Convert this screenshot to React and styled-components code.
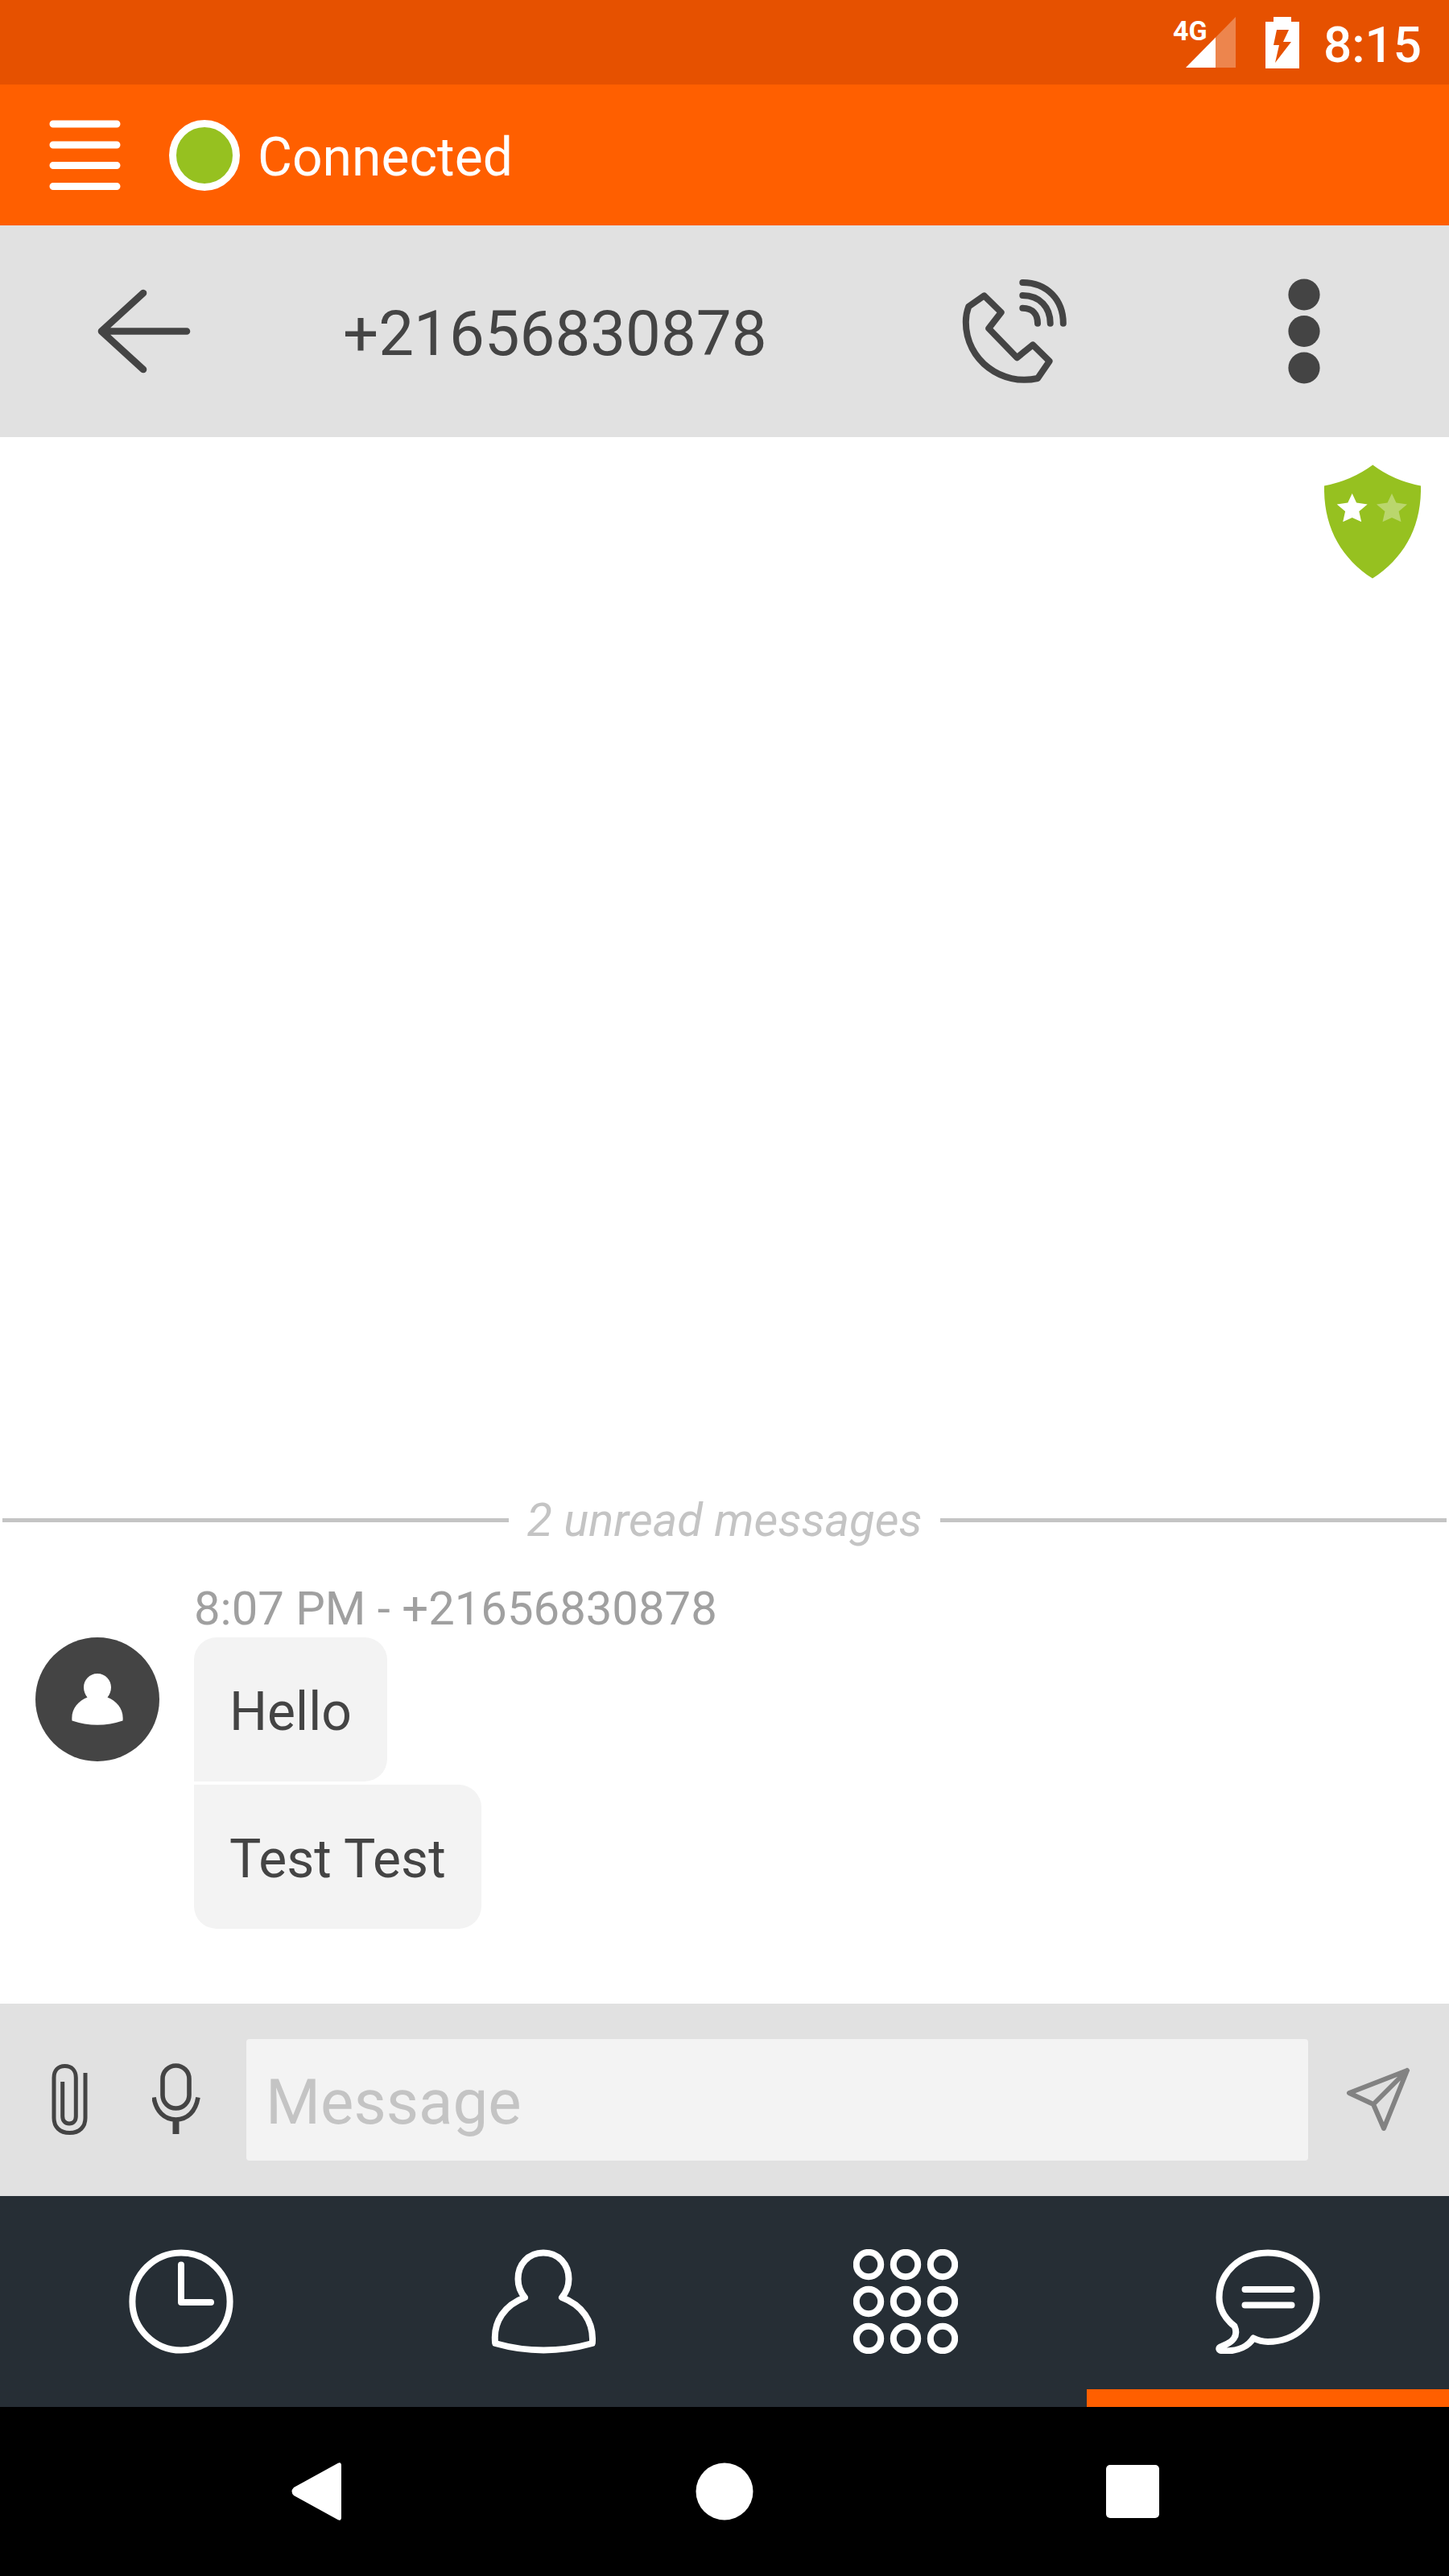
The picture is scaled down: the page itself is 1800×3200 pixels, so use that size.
import React from "react";
import styled, { createGlobalStyle, css } from "styled-components";

const color = {
  status: "#e65100",
  brand: "#ff5f00",
  bar: "#e1e1e1",
  field: "#f3f3f3",
  ink: "#444444",
  meta: "#a0a0a0",
  faint: "#c4c4c4",
  send: "#828282",
  green: "#96c120",
  tabs: "#262e35",
};

const GlobalStyle = createGlobalStyle`
  *, *::before, *::after { box-sizing: border-box; }
  body { margin: 0; background: #ffffff; }
  body, button, input { font-family: Roboto, "Noto Sans", sans-serif; }
  h1, p, ul { margin: 0; padding: 0; }
  svg { display: block; }
`;

/* Roboto labels sit a little below the middle of their bar. */
const barText = css`
  padding-top: 6px;
  font-weight: 400;
  white-space: nowrap;
`;

const Screen = styled.div`
  display: flex;
  flex-direction: column;
  min-height: 100vh;
`;

const StatusBar = styled.div`
  display: flex;
  align-items: center;
  justify-content: flex-end;
  height: 105px;
  padding-right: 34px;
  background: ${color.status};
  color: #ffffff;
`;

const Signal = styled.div`
  position: relative;
  display: flex;
  justify-content: flex-end;
  width: 78px;
  margin-right: 37px;
`;

const Network = styled.span`
  position: absolute;
  top: 0;
  left: 0;
  font-size: 34px;
  line-height: 34px;
  font-weight: 700;
`;

const Clock = styled.time`
  ${barText}
  margin-left: 30px;
  font-size: 62px;
  line-height: 72px;
  font-weight: 500;
`;

const AppBar = styled.header`
  display: flex;
  align-items: center;
  height: 175px;
  padding: 0 61px;
  background: ${color.brand};
  color: #ffffff;
`;

const IconButton = styled.button`
  display: flex;
  align-items: center;
  justify-content: center;
  flex: none;
  width: ${({ $width }) => $width || "auto"};
  height: ${({ $fill }) => ($fill ? "100%" : "auto")};
  padding: 0;
  border: 0;
  background: none;
  color: ${({ $color }) => $color || "inherit"};
  cursor: pointer;
`;

const Presence = styled.span`
  flex: none;
  width: 88px;
  height: 88px;
  margin: 0 22px 0 60px;
  border: 9px solid #ffffff;
  border-radius: 50%;
  background: ${color.green};
`;

const PresenceText = styled.span`
  ${barText}
  font-size: 66px;
  line-height: 80px;
`;

const ChatBar = styled.div`
  display: grid;
  grid-template-columns: 1fr 2fr 1fr 1fr;
  align-items: center;
  height: 263px;
  background: ${color.bar};
  color: ${color.ink};
`;

const Contact = styled.h1`
  ${barText}
  padding-left: 66px;
  font-size: 78px;
  line-height: 96px;
`;

const Conversation = styled.main`
  display: flex;
  flex: 1;
  flex-direction: column;
  padding: 34px 0 93px;
`;

const Trust = styled.div`
  align-self: flex-end;
  margin-right: 35px;
`;

const Unread = styled.div`
  display: flex;
  align-items: center;
  gap: 22px;
  margin-top: auto;
  padding: 0 3px;
  color: ${color.faint};
  font-size: 58px;
  line-height: 72px;
  font-style: italic;
  white-space: nowrap;

  &::before,
  &::after {
    content: "";
    flex: 1;
    height: 5px;
    background: ${color.faint};
  }
`;

const MessageGroup = styled.section`
  display: grid;
  grid-template-columns: 154px 1fr;
  column-gap: 43px;
  margin-top: 38px;
  padding: 0 44px;
`;

const Meta = styled.p`
  grid-column: 2;
  color: ${color.meta};
  font-size: 58px;
  line-height: 72px;
`;

const Avatar = styled.div`
  display: flex;
  align-items: center;
  justify-content: center;
  width: 154px;
  height: 154px;
  border-radius: 50%;
  background: ${color.ink};
`;

const Bubbles = styled.ul`
  display: flex;
  flex-direction: column;
  align-items: flex-start;
  gap: 4px;
  list-style: none;
`;

const Bubble = styled.li`
  padding: 48px 44px 41px;
  border-radius: 0 28px 28px 0;
  background: ${color.field};
  color: ${color.ink};
  font-size: 66px;
  line-height: 90px;

  &:first-child { border-top-left-radius: 28px; }
  &:last-child { border-bottom-left-radius: 28px; }
`;

const Composer = styled.form`
  display: flex;
  align-items: center;
  height: 239px;
  padding: 0 22px 0 21px;
  background: ${color.bar};
  color: ${color.ink};
`;

const MessageInput = styled.input`
  flex: 1;
  min-width: 0;
  height: 151px;
  margin: 0 21px;
  padding: 6px 24px 0;
  border: 0;
  border-radius: 4px;
  outline: 0;
  background: ${color.field};
  color: ${color.ink};
  font-size: 78px;

  &::placeholder { color: ${color.faint}; opacity: 1; }
`;

const Tabs = styled.nav`
  display: grid;
  grid-template-columns: repeat(4, 1fr);
  height: 262px;
  background: ${color.tabs};
`;

const Tab = styled.a`
  display: flex;
  align-items: center;
  justify-content: center;
  color: #ffffff;
  box-shadow: ${({ $active }) => ($active ? `inset 0 -22px ${color.brand}` : "none")};
`;

const SystemNav = styled.nav`
  display: grid;
  grid-template-columns: repeat(3, 1fr);
  align-items: center;
  height: 210px;
  padding: 0 140px;
  background: #000000;
  color: #ffffff;
`;

const Line = ({ w, h, stroke = 8, children, ...rest }) => (
  <svg
    width={w}
    height={h}
    viewBox={`0 0 ${w} ${h}`}
    fill="none"
    stroke="currentColor"
    strokeWidth={stroke}
    strokeLinecap="round"
    strokeLinejoin="round"
    aria-hidden="true"
    {...rest}
  >
    {children}
  </svg>
);

const Solid = ({ w, h, children }) => (
  <svg width={w} height={h} viewBox={`0 0 ${w} ${h}`} fill="currentColor" aria-hidden="true">
    {children}
  </svg>
);

const SignalIcon = () => (
  <Solid w={62} h={63}>
    <path d="M37 25.4 62 0V63H37Z" opacity="0.3" />
    <path d="M0 63 37 25.4V63Z" />
  </Solid>
);

const BatteryIcon = () => (
  <Solid w={42} h={64}>
    <path
      fillRule="evenodd"
      d="M10 0H32V6H42V64H0V6H10ZM14 16 10 35H17L12 57 32 31H22L29 16Z"
    />
  </Solid>
);

const MenuIcon = () => (
  <Line w={89} h={88} stroke={9}>
    <path d="M5 5H84M5 31H84M5 56.5H84M5 82.5H84" />
  </Line>
);

const BackIcon = () => (
  <Line w={118} h={105} stroke={8.6}>
    <path d="M111 52.5H5M57 5 5 52.5 57 100" />
  </Line>
);

const CallIcon = () => (
  <Line w={130} h={131}>
    <path d="M27.6 21.3 48.7 42 33.2 62 68.3 98.3 88 82.3 108.6 102.7 94 124C50 134 4.8 102 4.8 54Q4.8 44 8.3 34.7Z" />
    <path d="M75.3 5C106 5 125.8 27 125.8 55.7M75.3 21C97 21 109.7 36 109.7 55.7M75.3 36.7C88 36.7 94 45 94 55.7" />
  </Line>
);

const MoreIcon = () => (
  <Solid w={40} h={131}>
    <circle cx="20" cy="20" r="19.6" />
    <circle cx="20" cy="65.5" r="19.6" />
    <circle cx="20" cy="111" r="19.6" />
  </Solid>
);

const STAR = "M0-19.5 5.4-7.9 19-6 8.6 2.8 11.5 15.8 0 10.6-11.5 15.8-8.6 2.8-19-6-5.4-7.9Z";

const ShieldIcon = () => (
  <svg width="120" height="142" viewBox="0 0 120 142" role="img" aria-label="Trust level 1 of 2">
    <path
      d="M60.3 .5Q86 20 120 26.5C121 78 99 116 60 141.5C21 116-1 78 0 26.5Q34 20 60.3 .5Z"
      fill={color.green}
    />
    <path d={STAR} transform="translate(34.7 55.5)" fill="#ffffff" />
    <path d={STAR} transform="translate(84 55.5)" fill="#ffffff" opacity="0.35" />
  </svg>
);

const AvatarIcon = () => (
  <svg width="66" height="64" viewBox="0 0 66 64" fill="#ffffff" aria-hidden="true">
    <path d="M33 0C43 0 50 8 50 17C50 22 48 26.500 45.500 29.500C57 34 66 44 64.500 58.500Q33 69 1.500 58.500C0 44 9 34 20.500 29.500C18 26.500 16 22 16 17C16 8 23 0 33 0Z" />
  </svg>
);

const ClipIcon = () => (
  <Line w={46} h={91} stroke={5} strokeLinecap="butt">
    <path d="M42 12V68C42 79 35 86.500 22.500 86.500C10 86.500 3 79 3 68V18C3 9 8 3.500 16.600 3.500C25 3.500 30.300 9 30.300 18V66C30.300 71.500 27 75 22 75C17 75 13.700 71.500 13.700 66V23" />
  </Line>
);

const MicIcon = () => (
  <Line w={60} h={91} stroke={5.6} strokeLinecap="butt">
    <rect x="13" y="3" width="33" height="53" rx="16.5" />
    <path d="M2 42.500C5 60 15 70 29.500 70C44 70 54 60 57 42.500" />
    <path d="M29.500 70V88" strokeWidth="8" />
  </Line>
);

const SendIcon = () => (
  <Line w={80} h={82} stroke={6}>
    <path d="M4 32 76 4 47 76 34 46ZM76 4 34 46" />
  </Line>
);

const RecentIcon = () => (
  <Line w={130} h={130}>
    <circle cx="65" cy="65" r="60.6" />
    <path d="M65 19.500V66H102" />
  </Line>
);

const PersonIcon = () => (
  <Line w={130} h={130}>
    <path d="M65 4.500C84 4.500 96.500 19 96.500 37C96.500 46 93 54 88 60C112 69 128 89 125.800 117Q65 134 5.200 117C2 89 18 69 42 60C37 54 33.500 46 33.500 37C33.500 19 46 4.500 65 4.500Z" />
  </Line>
);

const KeypadIcon = () => (
  <Line w={130} h={130}>
    {[19, 65, 111].map((y) =>
      [19, 65, 111].map((x) => <circle key={`${x}-${y}`} cx={x} cy={y} r="15.2" />)
    )}
  </Line>
);

const ChatIcon = () => (
  <Line w={130} h={130}>
    <path d="M23.500 95.500C12 87 4.500 74 4.500 60C4.500 29 31 4.500 65 4.500C99 4.500 125.500 29 125.500 60C125.500 91 99 115 65 115Q56 115 47 110.500C41 120 29 127 11 126.500C3.500 126.500 2 122.500 8 120.500C21 116 29 108 23.500 95.500Z" />
    <path d="M36.500 50H94.500M36.500 69.500H94.500" />
  </Line>
);

const NavBackIcon = () => (
  <Solid w={62} h={72}>
    <path d="M58 .8Q62 -1 62 4V68Q62 73 58 71.200L3 41Q-2 36 3 31Z" />
  </Solid>
);

const NavHomeIcon = () => (
  <Solid w={72} h={72}>
    <circle cx="36" cy="36" r="35.5" />
  </Solid>
);

const NavRecentsIcon = () => (
  <Solid w={66} h={66}>
    <rect width="66" height="66" rx="5" />
  </Solid>
);

const tabs = [
  { id: "recent", label: "Recent calls", Icon: RecentIcon },
  { id: "contacts", label: "Contacts", Icon: PersonIcon },
  { id: "keypad", label: "Keypad", Icon: KeypadIcon },
  { id: "chats", label: "Chats", Icon: ChatIcon, active: true },
];

const messages = ["Hello", "Test Test"];

export default function App() {
  return (
    <>
      <GlobalStyle />
      <Screen>
        <StatusBar>
          <Signal>
            <Network>4G</Network>
            <SignalIcon />
          </Signal>
          <BatteryIcon />
          <Clock>8:15</Clock>
        </StatusBar>

        <AppBar>
          <IconButton type="button" aria-label="Menu">
            <MenuIcon />
          </IconButton>
          <Presence />
          <PresenceText>Connected</PresenceText>
        </AppBar>

        <ChatBar>
          <IconButton type="button" aria-label="Back" $fill>
            <BackIcon />
          </IconButton>
          <Contact>+21656830878</Contact>
          <IconButton type="button" aria-label="Call" $fill>
            <CallIcon />
          </IconButton>
          <IconButton type="button" aria-label="More options" $fill>
            <MoreIcon />
          </IconButton>
        </ChatBar>

        <Conversation>
          <Trust>
            <ShieldIcon />
          </Trust>
          <Unread>2 unread messages</Unread>
          <MessageGroup>
            <Meta>8:07 PM - +21656830878</Meta>
            <Avatar>
              <AvatarIcon />
            </Avatar>
            <Bubbles>
              {messages.map((text) => (
                <Bubble key={text}>{text}</Bubble>
              ))}
            </Bubbles>
          </MessageGroup>
        </Conversation>

        <Composer onSubmit={(event) => event.preventDefault()}>
          <IconButton type="button" aria-label="Attach a file" $width="132px">
            <ClipIcon />
          </IconButton>
          <IconButton type="button" aria-label="Record a voice message" $width="132px">
            <MicIcon />
          </IconButton>
          <MessageInput type="text" aria-label="Message" placeholder="Message" />
          <IconButton type="submit" aria-label="Send" $width="132px" $color={color.send}>
            <SendIcon />
          </IconButton>
        </Composer>

        <Tabs aria-label="Sections">
          {tabs.map(({ id, label, Icon, active }) => (
            <Tab
              key={id}
              href={`#${id}`}
              aria-label={label}
              aria-current={active ? "page" : undefined}
              $active={active}
            >
              <Icon />
            </Tab>
          ))}
        </Tabs>

        <SystemNav aria-label="System">
          <IconButton type="button" aria-label="System back" $fill>
            <NavBackIcon />
          </IconButton>
          <IconButton type="button" aria-label="Home" $fill>
            <NavHomeIcon />
          </IconButton>
          <IconButton type="button" aria-label="Recent apps" $fill>
            <NavRecentsIcon />
          </IconButton>
        </SystemNav>
      </Screen>
    </>
  );
}
